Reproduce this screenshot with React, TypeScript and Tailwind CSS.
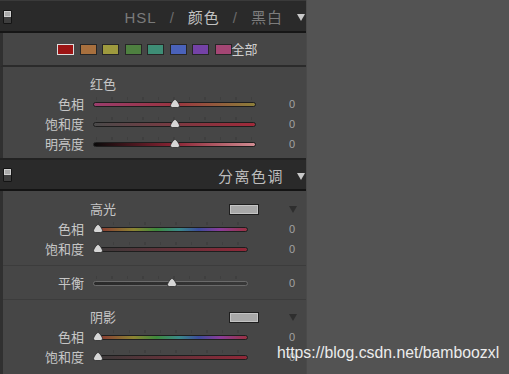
import React from "react";

const FONT = { fontFamily: '"Liberation Sans","Noto Sans CJK SC",sans-serif' };

function Toggle() {
  return (
    <div className="w-[9px] h-[14px] border border-[#141414] rounded-[1px] flex flex-col overflow-hidden">
      <div className="h-[6px] bg-[#a9a9a9] border border-[#cfcfcf]" />
      <div className="flex-1 bg-[#3e3e3e]" />
    </div>
  );
}

function Tri({ cls }: { cls: string }) {
  return (
    <svg width="8" height="8" viewBox="0 0 8 8" className={cls}>
      <path d="M0 1 L8 1 L4 8 Z" fill="currentColor" />
    </svg>
  );
}

function Thumb() {
  return (
    <svg width="10" height="9" viewBox="0 0 10 9">
      <path
        d="M5 0.5 C6.2 0.5 9.5 4.8 9.5 6.8 Q9.5 8.5 7.8 8.5 L2.2 8.5 Q0.5 8.5 0.5 6.8 C0.5 4.8 3.8 0.5 5 0.5Z"
        fill="#d6d6d6"
        stroke="#2a2a2a"
        strokeWidth="0.8"
      />
    </svg>
  );
}

function Slider({ w, track, pct }: { w: string; track: string; pct: number }) {
  return (
    <div className={`relative h-5 ${w}`}>
      <div className="absolute left-[3px] right-[3px] top-[3px] h-[3px] bg-[repeating-linear-gradient(to_right,#3c3c3c_0_1px,transparent_1px_15.5px)] opacity-70" />
      <div className={`absolute left-0 right-0 top-[8px] h-[5px] rounded-full border ${track}`} />
      <div className="absolute top-[5px] -translate-x-1/2 flex" style={{ left: `${pct}%` }}>
        <Thumb />
      </div>
    </div>
  );
}

function Row({
  label,
  sw,
  ml,
  track,
  pct,
}: {
  label: string;
  sw: string;
  ml: string;
  track: string;
  pct: number;
}) {
  return (
    <div className="h-5 flex items-center">
      <div className="w-[81px] text-right text-[13px] text-[#c6c6c6] leading-none">{label}</div>
      <div className={ml}>
        <Slider w={sw} track={track} pct={pct} />
      </div>
      <div className="flex-1 text-right pr-[11px] text-[11px] text-[#a2a2a2] leading-none">0</div>
    </div>
  );
}

function SubHead({ label }: { label: string }) {
  return (
    <div className="h-5 flex items-center">
      <div className="w-[226px] pl-[87px] text-[13px] text-[#c6c6c6] leading-none">{label}</div>
      <div className="w-[30px] h-[11px] bg-[#a8a8a8] border border-[#1e1e1e] shadow-[inset_0_0_0_1px_#c4c4c4]" />
      <div className="ml-[30px] flex text-[#2e2e2e]">
        <Tri cls="" />
      </div>
    </div>
  );
}

const swatches = [
  "bg-[#9c1414]",
  "bg-[#a8703e]",
  "bg-[#9e9a3e]",
  "bg-[#4e8040]",
  "bg-[#3e8e76]",
  "bg-[#4a62ba]",
  "bg-[#7442a6]",
  "bg-[#a44674]",
];

export default function App() {
  return (
    <div className="w-[509px] h-[374px] bg-[#535353] flex relative overflow-hidden" style={FONT}>
      <div className="w-[306px] h-full flex flex-col bg-[#464646]">
        {/* Header 1 */}
        <div className="h-[33px] shrink-0 bg-[#2a2a2a] border-t border-[#3a3a3a] border-b-2 border-b-[#161616] flex items-center pl-[3px] pt-[1px]">
          <Toggle />
          <div className="ml-auto flex items-center text-[15px] leading-none tracking-[1px] pt-[1px]">
            <span className="text-[#7a7a7a]">HSL</span>
            <span className="text-[#6a6a6a] ml-[13px]">/</span>
            <span className="text-[#c2c2c2] ml-[13px]">颜色</span>
            <span className="text-[#6a6a6a] ml-[13px]">/</span>
            <span className="text-[#7c7c7c] ml-[13px]">黑白</span>
          </div>
          <div className="ml-[14px] mr-[1px] flex text-[#c8c8c8]">
            <Tri cls="" />
          </div>
        </div>

        {/* Swatches */}
        <div className="h-[34px] shrink-0 border-l-[3px] border-l-[#303030] border-b-2 border-b-[#2b2b2b] flex items-center">
          <div className="ml-[54px] flex items-center gap-[5.5px]">
            {swatches.map((c, i) => (
              <div
                key={i}
                className={`w-[17px] h-[11px] border ${i === 0 ? "border-[#dcdcdc]" : "border-[#262626]"} ${c}`}
              />
            ))}
          </div>
          <span className="text-[13px] text-[#cfcfcf] leading-none">全部</span>
        </div>

        {/* HSL section */}
        <div className="h-[91px] shrink-0 border-l-[3px] border-l-[#303030] pt-[7px] flex flex-col">
          <div className="h-5 flex items-center pl-[87px] text-[13px] text-[#c6c6c6] leading-none">红色</div>
          <Row
            label="色相"
            sw="w-[163px]"
            ml="ml-[9px]"
            track="border-[#1e1e1e] bg-[linear-gradient(to_right,#9a3d6c,#9a3440_50%,#8c7e3a)]"
            pct={50}
          />
          <Row
            label="饱和度"
            sw="w-[163px]"
            ml="ml-[9px]"
            track="border-[#1e1e1e] bg-[linear-gradient(to_right,#4a4a4a,#7a3a42_50%,#a02a3a)]"
            pct={50}
          />
          <Row
            label="明亮度"
            sw="w-[163px]"
            ml="ml-[9px]"
            track="border-[#1e1e1e] bg-[linear-gradient(to_right,#0a0a0a,#8a2434_50%,#d08c92)]"
            pct={50}
          />
        </div>

        {/* Header 2 */}
        <div className="h-[33px] shrink-0 bg-[#2a2a2a] border-t-2 border-t-[#222222] border-b-2 border-b-[#141414] flex items-center pl-[3px]">
          <Toggle />
          <span className="ml-auto text-[15px] leading-none tracking-[1.5px] text-[#bdbdbd] pt-[4px]">分离色调</span>
          <div className="ml-[13px] mr-[1px] flex text-[#c8c8c8] pt-[3px]">
            <Tri cls="" />
          </div>
        </div>

        {/* Split toning */}
        <div className="flex-1 border-l-[3px] border-l-[#303030] pt-[8px] flex flex-col">
          <SubHead label="高光" />
          <Row
            label="色相"
            sw="w-[153px]"
            ml="ml-[11px]"
            track="border-[#1e1e1e] bg-[linear-gradient(to_right,#8a3232,#8c8432_25%,#3e8a3c_40%,#3a8a8a_55%,#3c4c9c_68%,#8a3c9a_82%,#9a3242)]"
            pct={2}
          />
          <Row
            label="饱和度"
            sw="w-[153px]"
            ml="ml-[11px]"
            track="border-[#1e1e1e] bg-[linear-gradient(to_right,#3a3a3a,#902838)]"
            pct={2}
          />
          <div className="mt-[6px] h-px bg-[#3c3c3c]" />
          <div className="mt-[7px]">
            <Row
              label="平衡"
              sw="w-[155px]"
              ml="ml-[9px]"
              track="border-[#6a6a6a] bg-[linear-gradient(to_right,#2a2a2a,#383838)]"
              pct={51}
            />
          </div>
          <div className="mt-[6px] h-px bg-[#3c3c3c]" />
          <div className="mt-[7px]">
            <SubHead label="阴影" />
          </div>
          <Row
            label="色相"
            sw="w-[153px]"
            ml="ml-[11px]"
            track="border-[#1e1e1e] bg-[linear-gradient(to_right,#8a3232,#8c8432_25%,#3e8a3c_40%,#3a8a8a_55%,#3c4c9c_68%,#8a3c9a_82%,#9a3242)]"
            pct={2}
          />
          <Row
            label="饱和度"
            sw="w-[153px]"
            ml="ml-[11px]"
            track="border-[#1e1e1e] bg-[linear-gradient(to_right,#3a3a3a,#902838)]"
            pct={2}
          />
        </div>
      </div>
      <div className="w-px h-full bg-[#4a4a4a]" />

      {/* watermark */}
      <div className="absolute left-[277px] top-[345px] text-[15.8px] leading-none text-[#ececec]" style={{ fontFamily: '"Liberation Sans",sans-serif' }}>
        https://blog.csdn.net/bamboozxl
      </div>
    </div>
  );
}
